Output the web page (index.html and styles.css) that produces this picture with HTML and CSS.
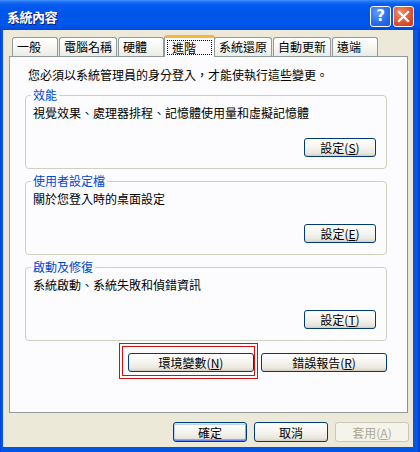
FILE: index.html
```html
<!DOCTYPE html>
<html lang="zh-Hant">
<head>
<meta charset="utf-8">
<title>系統內容</title>
<link rel="stylesheet" href="styles.css">
</head>
<body>
<div class="window">
  <div class="titlebar">
    <span class="title">系統內容</span>
    <div class="caption-buttons">
      <span class="cap-btn help">?</span>
      <span class="cap-btn close">
        <svg width="13" height="13" viewBox="0 0 13 13"><path d="M2 2 L11 11 M11 2 L2 11" stroke="#fff" stroke-width="2.2" stroke-linecap="square"/></svg>
      </span>
    </div>
  </div>
  <div class="client">
    <div class="tabs">
      <div class="tab t-short">一般</div>
      <div class="tab t-long">電腦名稱</div>
      <div class="tab t-short">硬體</div>
      <div class="tab t-short selected"><span class="focus">進階</span></div>
      <div class="tab t-long">系統還原</div>
      <div class="tab t-long">自動更新</div>
      <div class="tab t-short">遠端</div>
    </div>
    <div class="panel">
      <p class="intro">您必須以系統管理員的身分登入，才能使執行這些變更。</p>
      <fieldset class="group">
        <legend>效能</legend>
        <p class="desc">視覺效果、處理器排程、記憶體使用量和虛擬記憶體</p>
        <div class="group-actions"><button class="btn btn-set">設定(<u>S</u>)</button></div>
      </fieldset>
      <fieldset class="group">
        <legend>使用者設定檔</legend>
        <p class="desc">關於您登入時的桌面設定</p>
        <div class="group-actions"><button class="btn btn-set">設定(<u>E</u>)</button></div>
      </fieldset>
      <fieldset class="group">
        <legend>啟動及修復</legend>
        <p class="desc">系統啟動、系統失敗和偵錯資訊</p>
        <div class="group-actions"><button class="btn btn-set">設定(<u>T</u>)</button></div>
      </fieldset>
      <div class="extra-actions">
        <span class="annotated"><button class="btn btn-wide">環境變數(<u>N</u>)</button></span>
        <button class="btn btn-wide">錯誤報告(<u>R</u>)</button>
      </div>
    </div>
    <div class="dialog-actions">
      <button class="btn btn-dlg default">確定</button>
      <button class="btn btn-dlg">取消</button>
      <button class="btn btn-dlg" disabled>套用(<u>A</u>)</button>
    </div>
  </div>
</div>
</body>
</html>
```
FILE: styles.css
```css
* { box-sizing: border-box; }
html, body { margin: 0; padding: 0; }
body {
  width: 420px;
  height: 452px;
  overflow: hidden;
  background: #0054e3;
  font-family: "Noto Sans CJK TC", "Noto Sans", sans-serif;
  font-size: 12px;
  color: #000;
}
.window {
  width: 420px;
  height: 452px;
  display: flex;
  flex-direction: column;
  background: linear-gradient(to right, #0031c8 0, #0a58e6 1px, #0055e5 3px, #0055e5 calc(100% - 7px), #0a58e6 calc(100% - 3px), #0031c8 100%);
}
.titlebar {
  height: 30px;
  flex: none;
  display: flex;
  align-items: center;
  padding: 2px 6px 0 7px;
  background: linear-gradient(to bottom, #3d95ff 0, #1e6ff5 2px, #0a5ff0 4px, #0058ee 7px, #0054e8 16px, #0057ec 24px, #0050e4 28px, #0046d8 30px);
}
.title {
  flex: 1;
  color: #fff;
  font-weight: bold;
  font-size: 13px;
  letter-spacing: -0.5px;
  text-shadow: 1px 1px 0 #0a1b7a;
}
.caption-buttons {
  display: flex;
  gap: 2px;
}
.cap-btn {
  width: 21px;
  height: 21px;
  border: 1px solid #fff;
  border-radius: 3px;
  display: flex;
  align-items: center;
  justify-content: center;
}
.help {
  background: radial-gradient(circle at 35% 30%, #5d9bff 0, #2a6ef0 55%, #1c50d4 100%);
  color: #fff;
  font-family: "DejaVu Sans", sans-serif;
  font-weight: bold;
  font-size: 15px;
}
.close {
  background: radial-gradient(circle at 35% 30%, #f28e6a 0, #e0552f 55%, #c63a18 100%);
}
.client {
  flex: 1;
  margin: 0 7px 5px 3px;
  background: #ece9d8;
  display: flex;
  flex-direction: column;
  padding: 6px 5px 0 6px;
}
.tabs {
  display: flex;
  align-items: flex-end;
  padding-left: 3px;
  height: 21px;
  margin-bottom: -1px;
  position: relative;
  z-index: 1;
}
.tab {
  height: 19px;
  border: 1px solid #919b9c;
  border-bottom: none;
  border-radius: 3px 3px 0 0;
  background: linear-gradient(to bottom, #fff 0, #f7f7f3 50%, #ecebe6 100%);
  padding-left: 4px;
  line-height: 17px;
  white-space: nowrap;
  margin-right: 1px;
  margin-bottom: 1px;
}
.t-short { width: 46px; }
.t-long { width: 58px; }
.tab.selected {
  width: 51px;
  height: 22px;
  margin: 0 -1px 0 -1px;
  padding: 2px 0 0 2px;
  background: #fcfcfe;
  border-top: 3px solid #f9b43a;
  line-height: 14px;
}
.focus {
  display: block;
  width: 45px;
  height: 15px;
  border: 1px dotted #000;
  padding-left: 4px;
}
.panel {
  flex: 1;
  background: #fcfcfe;
  border: 1px solid #919b9c;
  border-right-color: #8a9394;
  padding: 11px 20px 0 15px;
}
.intro {
  margin: 0 0 0 3px;
  line-height: 14px;
}
.group {
  margin: 6px 0 0 0;
  padding: 0 10px 11px 7px;
  border: 1px solid #d0d0bf;
  border-radius: 4px;
  min-width: 0;
}
.group + .group { margin-top: 5px; }
.group legend {
  color: #0046d5;
  padding: 0 2px;
  margin-left: -2px;
  line-height: 14px;
}
.desc {
  margin: 4px 0 0 0;
  line-height: 14px;
}
.group-actions {
  display: flex;
  justify-content: flex-end;
  margin-top: 18px;
}
.btn {
  font-family: "Noto Sans CJK TC", "Noto Sans", sans-serif;
  font-size: 12px;
  color: #000;
  height: 19px;
  padding: 0;
  line-height: 15px;
  border: 1px solid #003c74;
  border-radius: 3px;
  background: linear-gradient(to bottom, #ffffff 0, #f6f5f0 45%, #ebe9e0 80%, #d8d3c8 100%);
  box-shadow: inset 0 -1px 0 #d6d0c5;
}
.btn u { text-decoration: underline; text-underline-offset: 1px; }
.btn-set { width: 72px; }
.extra-actions {
  display: flex;
  justify-content: flex-end;
  gap: 7px;
  margin-top: 12px;
}
.btn-wide { width: 126px; }
.annotated {
  position: relative;
  display: inline-flex;
}
.annotated::before,
.annotated::after {
  content: "";
  position: absolute;
  border: 1px solid #cc1111;
  pointer-events: none;
}
.annotated::before { left: -9px; top: -10px; right: -4px; bottom: -7px; }
.annotated::after { left: -6px; top: -7px; right: -1px; bottom: -4px; }
.dialog-actions {
  display: flex;
  justify-content: flex-end;
  gap: 7px;
  padding: 9px 0 0 0;
  height: 34px;
  margin-right: -1px;
}
.btn-dlg { width: 74px; height: 20px; }
.btn-dlg.default {
  box-shadow: inset 0 1px 0 #cee7ff, inset 0 -1px 0 #6982ee, inset 1px 0 0 #bcd4f6, inset -1px 0 0 #89ade4, inset 0 2px 0 #bcd4f6, inset 0 -2px 0 #89ade4;
}
.btn[disabled] {
  color: #aca899;
  border-color: #c9c7ba;
  background: #f5f4ea;
  box-shadow: none;
}
```
